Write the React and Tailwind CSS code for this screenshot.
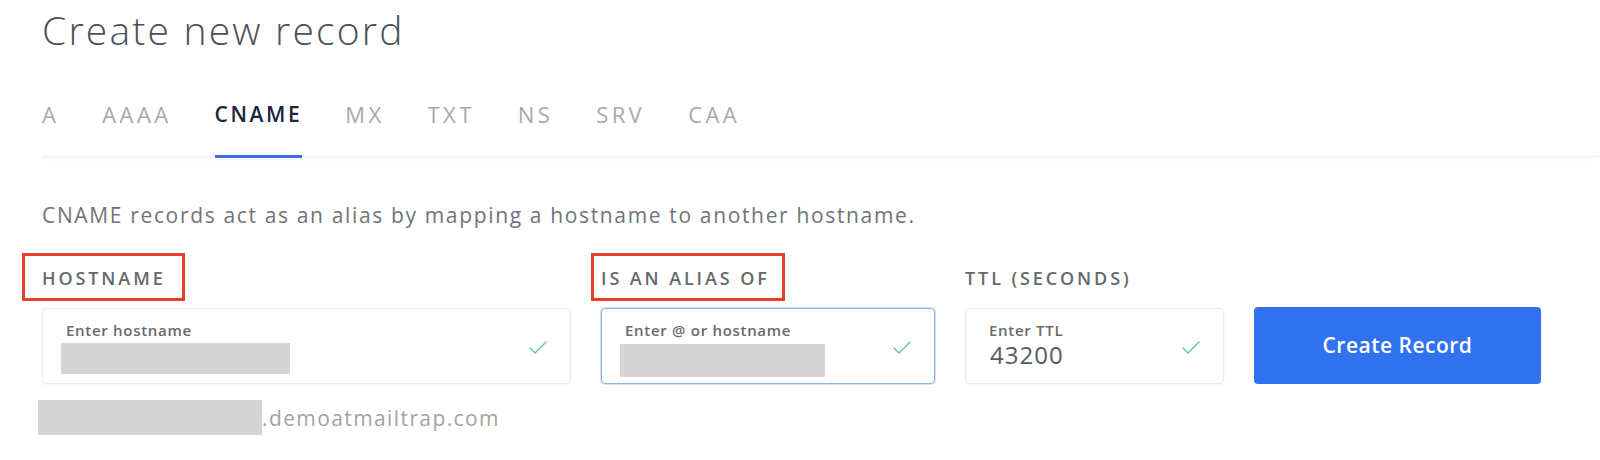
import React from 'react';
import { Check } from 'lucide-react';

const tabs = ['A', 'AAAA', 'CNAME', 'MX', 'TXT', 'NS', 'SRV', 'CAA'];

function FieldBox({ label, focused, children }) {
  return (
    <div
      className={
        'relative h-[76px] rounded-[4px] bg-white border ' +
        (focused
          ? 'border-[#8fb0ee] shadow-[0_0_0_1px_rgba(143,176,238,0.35)]'
          : 'border-[#ececec] shadow-[0_1px_3px_rgba(0,0,0,0.04)]')
      }
    >
      <div className="pl-[23px] pt-[12px] text-[15px] leading-[18px] font-semibold tracking-[0.7px] text-[#6a6a6a]">
        {label}
      </div>
      {children}
      <Check
        size={24}
        strokeWidth={1.3}
        className="absolute right-[20px] top-[27px] text-[#55c79a]"
      />
    </div>
  );
}

function Redacted({ className }) {
  return <div className={'bg-[#d5d5d5] ' + className} />;
}

function FieldLabel({ children, boxClass }) {
  return (
    <div className="h-[20px] text-[18px] leading-[20px] font-semibold tracking-[2.9px] text-[#65696d]">
      <span className="relative inline-block">
        {children}
        <span className={'absolute border-[3px] border-[#e8412b] ' + boxClass} />
      </span>
    </div>
  );
}

export default function App() {
  return (
    <div className="w-[1600px] h-[460px] overflow-hidden bg-white font-['Open_Sans',sans-serif]">
      <div className="pl-[42px]">
        {/* Title */}
        <h1 className="pt-[5px] text-[39px] leading-[50px] font-light tracking-[2.2px] text-[#4b5058]">
          Create new record
        </h1>

        {/* Record type tabs */}
        <div className="mt-[45px] flex gap-[43px] border-b-[3px] border-[#f6f6f6] shadow-[0_3px_6px_rgba(0,0,0,0.015)]">
          {tabs.map((t) => (
            <div
              key={t}
              className={
                '-mb-[3px] pb-[27px] border-b-[3px] leading-[28px] ' +
                (t === 'CNAME'
                  ? 'border-[#3d6fe0] text-[21px] text-[#1c2541] font-semibold tracking-[2.6px]'
                  : 'border-transparent text-[22px] text-[#a6aaae] tracking-[3.4px]')
              }
            >
              {t}
            </div>
          ))}
        </div>

        {/* Description */}
        <p className="mt-[43px] text-[21px] leading-[28px] tracking-[1.65px] text-[#707478]">
          CNAME records act as an alias by mapping a hostname to another hostname.
        </p>

        {/* Form row */}
        <div className="mt-[39px] flex gap-[30px]">
          <div className="w-[529px] flex flex-col">
            <FieldLabel boxClass="-left-[20px] -right-[19px] -top-[15px] -bottom-[13px]">HOSTNAME</FieldLabel>
            <div className="mt-[20px]">
              <FieldBox label="Enter hostname">
                <Redacted className="ml-[18px] mt-[4px] w-[229px] h-[31px]" />
              </FieldBox>
            </div>
            <div className="mt-[16px] -ml-[4px] flex items-center h-[35px]">
              <Redacted className="w-[224px] h-[35px]" />
              <span className="text-[21px] leading-[28px] tracking-[1.4px] text-[#a3a3a3]">.demoatmailtrap.com</span>
            </div>
          </div>

          <div className="w-[334px] flex flex-col">
            <FieldLabel boxClass="-left-[10px] -right-[15px] -top-[15px] -bottom-[13px]">IS AN ALIAS OF</FieldLabel>
            <div className="mt-[20px]">
              <FieldBox label="Enter @ or hostname" focused>
                <Redacted className="ml-[18px] mt-[5px] w-[205px] h-[33px]" />
              </FieldBox>
            </div>
          </div>

          <div className="w-[259px] flex flex-col">
            <FieldLabel boxClass="hidden">TTL (SECONDS)</FieldLabel>
            <div className="mt-[20px]">
              <FieldBox label="Enter TTL">
                <div className="pl-[24px] mt-[1px] text-[24px] leading-[30px] tracking-[1px] text-[#565a5e]">43200</div>
              </FieldBox>
            </div>
          </div>

          <div className="w-[287px] flex flex-col">
            <div className="h-[20px]" />
            <button className="mt-[19px] h-[77px] rounded-[4px] bg-[#3172f0] text-white text-[21px] tracking-[0.5px] font-semibold">
              Create Record
            </button>
          </div>
        </div>
      </div>
    </div>
  );
}
